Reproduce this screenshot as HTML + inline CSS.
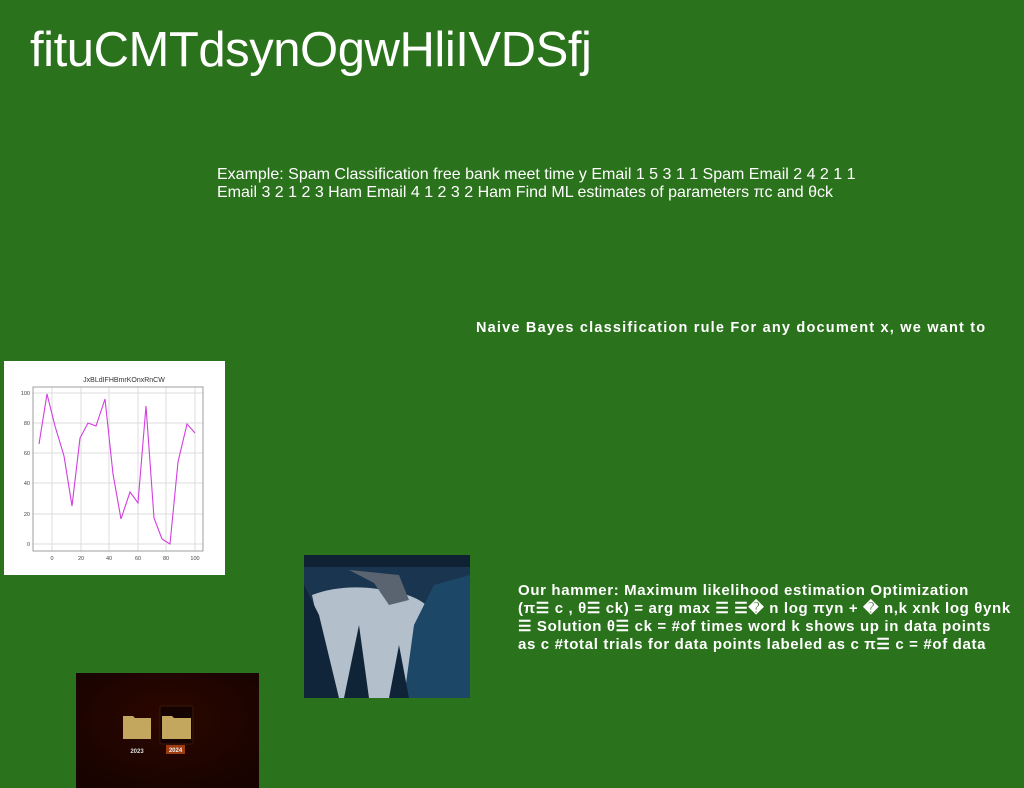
<!DOCTYPE html>
<html><head><meta charset="utf-8"><style>
body{margin:0;width:1024px;height:788px;background:#2b721c;position:relative;overflow:hidden;font-family:"Liberation Sans",sans-serif;color:#fff}
.a{position:absolute;white-space:nowrap}
</style></head><body>
<div class="a" style="left:30px;top:22px;font-size:49px;letter-spacing:-0.45px">fituCMTdsynOgwHliIVDSfj</div>
<div class="a" style="left:217px;top:166px;font-size:16px;line-height:18px;letter-spacing:0px">Example: Spam Classification free bank meet time y Email 1 5 3 1 1 Spam Email 2 4 2 1 1<br>Email 3 2 1 2 3 Ham Email 4 1 2 3 2 Ham Find ML estimates of parameters πc and θck</div>
<div class="a" style="left:476px;top:320px;font-size:14.5px;font-weight:bold;letter-spacing:1.2px">Naive Bayes classification rule For any document x, we want to</div>
<div class="a" style="left:518px;top:582px;font-size:15px;font-weight:bold;line-height:18px;letter-spacing:0.65px">Our hammer: Maximum likelihood estimation Optimization<br>(π☰ c , θ☰ ck) = arg max ☰ ☰� n log πyn + � n,k xnk log θynk<br>☰ Solution θ☰ ck = #of times word k shows up in data points<br>as c #total trials for data points labeled as c π☰ c = #of data</div>
<svg class="a" style="left:4px;top:361px" width="221" height="214" viewBox="4 361 221 214">
<rect x="4" y="361" width="221" height="214" fill="#fff"/>
<text x="124" y="382" font-size="7" fill="#333" text-anchor="middle" font-family="Liberation Sans">JxBLdIFHBmrKOnxRnCW</text>
<g stroke="#ddd" stroke-width="1">
<line x1="52" y1="387" x2="52" y2="551"/><line x1="81" y1="387" x2="81" y2="551"/><line x1="109" y1="387" x2="109" y2="551"/><line x1="138" y1="387" x2="138" y2="551"/><line x1="166" y1="387" x2="166" y2="551"/><line x1="195" y1="387" x2="195" y2="551"/>
<line x1="33" y1="544" x2="203" y2="544"/><line x1="33" y1="514" x2="203" y2="514"/><line x1="33" y1="483" x2="203" y2="483"/><line x1="33" y1="453" x2="203" y2="453"/><line x1="33" y1="423" x2="203" y2="423"/><line x1="33" y1="393" x2="203" y2="393"/>
</g>
<rect x="33" y="387" width="170" height="164" fill="none" stroke="#888" stroke-width="0.8"/>
<g font-size="5.5" fill="#444" font-family="Liberation Sans">
<text x="52" y="560" text-anchor="middle">0</text><text x="81" y="560" text-anchor="middle">20</text><text x="109" y="560" text-anchor="middle">40</text><text x="138" y="560" text-anchor="middle">60</text><text x="166" y="560" text-anchor="middle">80</text><text x="195" y="560" text-anchor="middle">100</text>
<text x="30" y="546" text-anchor="end">0</text><text x="30" y="516" text-anchor="end">20</text><text x="30" y="485" text-anchor="end">40</text><text x="30" y="455" text-anchor="end">60</text><text x="30" y="425" text-anchor="end">80</text><text x="30" y="395" text-anchor="end">100</text>
</g>
<polyline fill="none" stroke="#d23ee0" stroke-width="1.1" points="39,444 47,394 55,426 64,456 72,506 80,438 88,423 96,426 105,399 113,474 121,519 130,492 138,503 146,406 154,518 162,539 170,544 178,462 187,424 195,433"/>
</svg>
<svg class="a" style="left:304px;top:555px" width="166" height="143">
<rect width="166" height="143" fill="#1a3550"/>
<path d="M8 40 Q40 28 80 35 Q120 40 130 60 L115 143 L30 143 Z" fill="#b3c0cc"/>
<path d="M45 15 L95 20 L105 45 L85 50 L70 28Z" fill="#5a6470"/>
<path d="M0 0 H166 V12 H0Z" fill="#0f2233"/>
<path d="M0 30 L15 60 L35 143 H0Z" fill="#10243a"/>
<path d="M100 143 L110 70 L130 30 L166 20 V143Z" fill="#1d4766"/>
<path d="M40 143 L55 70 L65 143Z M85 143 L95 90 L105 143Z" fill="#102438"/>
</svg>
<svg class="a" style="left:76px;top:673px" width="183" height="115">
<defs><radialGradient id="r" cx="0.5" cy="0.4" r="0.7"><stop offset="0" stop-color="#2c0700"/><stop offset="1" stop-color="#170300"/></radialGradient></defs>
<rect width="183" height="115" fill="url(#r)"/>
<path d="M47 43 h10 l2 2 h16 v21 h-28z" fill="#c4a75e"/>
<rect x="84" y="33" width="33" height="38" rx="2" fill="#140300" stroke="#3a1a08"/>
<path d="M86 43 h10 l2 2 h17 v21 h-29z" fill="#c4a75e"/>
<text x="61" y="80" font-size="6" fill="#ddd" text-anchor="middle" font-family="Liberation Sans" font-weight="bold">2023</text>
<rect x="90" y="72" width="19" height="9" fill="#9c3a10"/>
<text x="99.5" y="79" font-size="6" fill="#eee" text-anchor="middle" font-family="Liberation Sans" font-weight="bold">2024</text>
</svg>
</body></html>
